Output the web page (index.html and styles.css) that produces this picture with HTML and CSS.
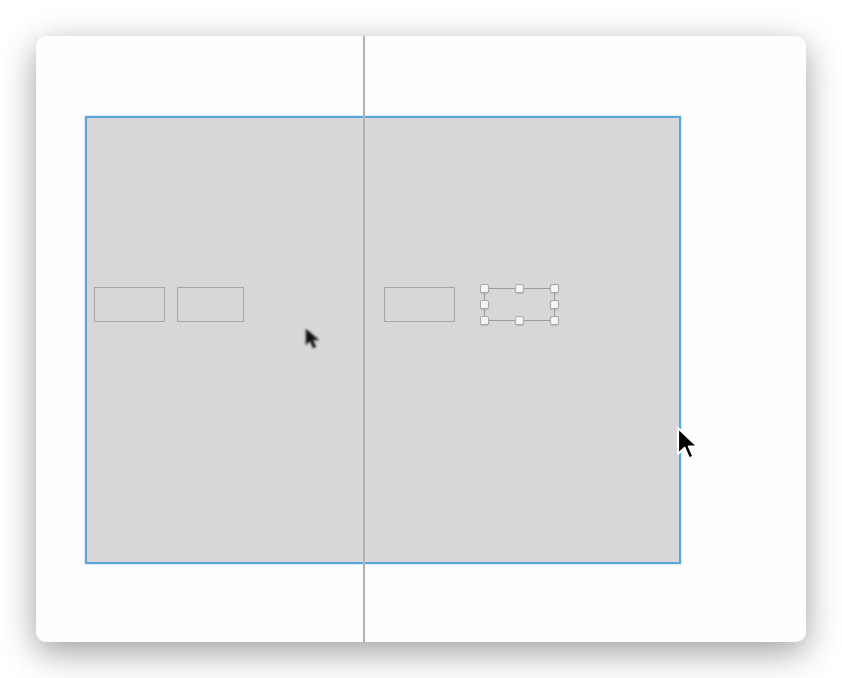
FILE: index.html
```html
<!DOCTYPE html>
<html lang="en">
<head>
    <meta charset="UTF-8">
    <title>Layout Canvas</title>
    <link rel="stylesheet" href="styles.css">
</head>
<body>
    <div class="card">
        <!-- Artboard -->
        <div class="artboard">
            <div class="row">
                <div class="box box-a"></div>
                <div class="box box-b"></div>
                <div class="box box-c"></div>
                <div class="selection">
                    <span class="handle h-tl"></span>
                    <span class="handle h-tm"></span>
                    <span class="handle h-tr"></span>
                    <span class="handle h-ml"></span>
                    <span class="handle h-mr"></span>
                    <span class="handle h-bl"></span>
                    <span class="handle h-bm"></span>
                    <span class="handle h-br"></span>
                </div>
            </div>
        </div>

        <!-- Center guide -->
        <div class="guide"></div>

        <!-- Cursors -->
        <svg class="cursor cursor-small" width="16" height="22" viewBox="0 0 16 22">
            <path d="M1 1 L1 17 L5 13 L8 20 L11 19 L8 12 L14 12 Z" fill="#111" stroke="#555" stroke-width="0.8"/>
        </svg>
        <svg class="cursor cursor-big" width="26" height="38" viewBox="0 0 26 38">
            <path d="M2 2 L2 28 L8.5 22 L13 32.5 L17.5 30.5 L13 20.5 L21.5 20.5 Z" fill="#000" stroke="#fff" stroke-width="2.2" stroke-linejoin="round"/>
        </svg>
    </div>
</body>
</html>
```

FILE: styles.css
```css
/* General */
body {
    margin: 0;
    padding: 36px 0 36px 36px;
    background: #fff;
    font-family: "Liberation Sans", Arial, sans-serif;
}

/* Card */
.card {
    position: relative;
    width: 770px;
    height: 606px;
    box-sizing: border-box;
    padding: 80px 0 0 49px;
    background: #fefefe;
    border-radius: 10px;
    box-shadow: 0 10px 34px rgba(0, 0, 0, 0.38);
}

/* Artboard */
.artboard {
    width: 596px;
    height: 448px;
    box-sizing: border-box;
    padding: 169px 0 0 7px;
    background: #d7d7d9;
    border: 2px solid #59a5db;
    box-shadow: 0 0 2px #a9d6f3;
}

.row {
    display: flex;
    align-items: center;
}

.box {
    height: 35px;
    box-sizing: border-box;
    border: 1.5px solid #a6a6a8;
}

.box-a { width: 71px; }
.box-b { width: 67px; margin-left: 12px; }
.box-c { width: 71px; margin-left: 140px; }

/* Selected shape */
.selection {
    position: relative;
    width: 71px;
    height: 33px;
    margin-left: 29px;
    border: 1px solid #9c9c9e;
    box-sizing: border-box;
}

.handle {
    position: absolute;
    width: 7px;
    height: 7px;
    background: #f4f4f4;
    border: 1px solid #a8a8a8;
    border-radius: 2px;
    box-shadow: 0 1px 1px rgba(0, 0, 0, 0.15);
}

.h-tl { left: -5px; top: -5px; }
.h-tm { left: 30px; top: -5px; }
.h-tr { right: -5px; top: -5px; }
.h-ml { left: -5px; top: 11px; }
.h-mr { right: -5px; top: 11px; }
.h-bl { left: -5px; bottom: -5px; }
.h-bm { left: 30px; bottom: -5px; }
.h-br { right: -5px; bottom: -5px; }

/* Vertical guide */
.guide {
    position: absolute;
    top: 0;
    bottom: 0;
    left: 327px;
    width: 2px;
    background: #b2b2b4;
}

/* Cursors */
.cursor {
    position: absolute;
}

.cursor-small {
    left: 269px;
    top: 292px;
    filter: blur(0.8px);
}

.cursor-big {
    left: 640px;
    top: 390px;
}
```
